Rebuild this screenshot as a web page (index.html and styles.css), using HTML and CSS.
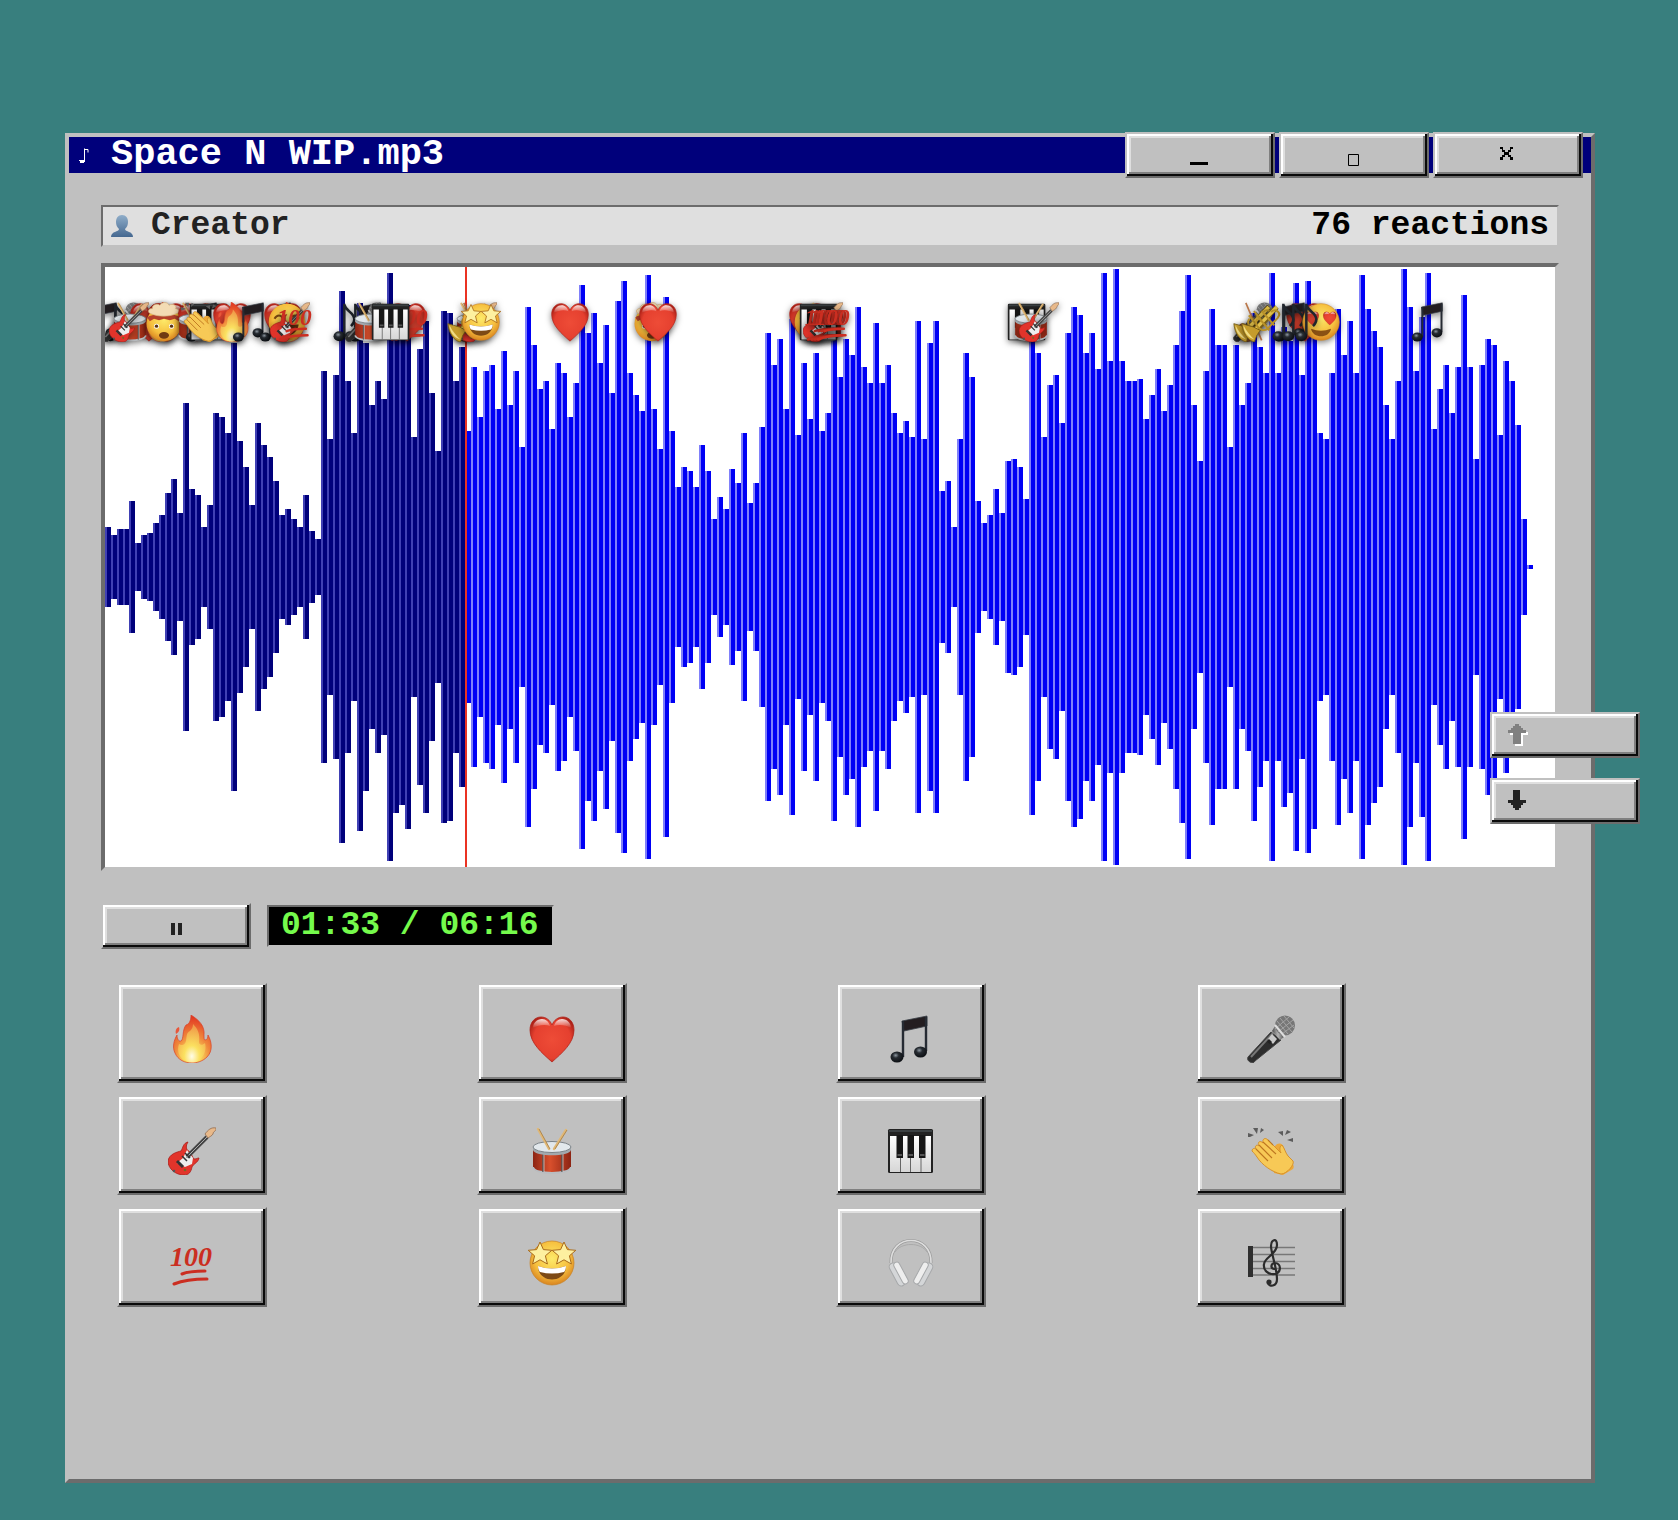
FILE: index.html
```html
<!DOCTYPE html>
<html lang="en">
<head>
<meta charset="utf-8">
<meta name="viewport" content="width=device-width, initial-scale=1">
<title>Space N WIP.mp3</title>
<link rel="stylesheet" href="styles.css">
</head>
<body>
<svg class="sprite" aria-hidden="true">
  <defs>
    <radialGradient id="g-fire" cx=".5" cy=".9" r=".85"><stop offset="0" stop-color="#fffbe0"/><stop offset=".2" stop-color="#fbe25f"/><stop offset=".55" stop-color="#f08a3c"/><stop offset="1" stop-color="#e23a22"/></radialGradient>
    <radialGradient id="g-flame" cx=".5" cy=".85" r=".8"><stop offset="0" stop-color="#fffce8"/><stop offset=".35" stop-color="#fbe160"/><stop offset="1" stop-color="#f09a48"/></radialGradient>
    <radialGradient id="g-heart" cx=".5" cy=".5" r=".6"><stop offset="0" stop-color="#ee4c37"/><stop offset=".7" stop-color="#e5402f"/><stop offset="1" stop-color="#a31d14"/></radialGradient>
    <linearGradient id="g-shine" x2="0" y2="1"><stop offset="0" stop-color="#fff" stop-opacity=".85"/><stop offset="1" stop-color="#fff" stop-opacity="0"/></linearGradient>
    <radialGradient id="g-face" cx=".5" cy=".4" r=".6"><stop offset="0" stop-color="#fdea6a"/><stop offset=".65" stop-color="#f6bf3e"/><stop offset="1" stop-color="#d98420"/></radialGradient>
    <linearGradient id="g-drum"><stop offset="0" stop-color="#8c2413"/><stop offset=".45" stop-color="#d84f2c"/><stop offset="1" stop-color="#8c2413"/></linearGradient>
    <linearGradient id="g-steel"><stop offset="0" stop-color="#4a4a4a"/><stop offset=".5" stop-color="#b4b4b4"/><stop offset="1" stop-color="#555"/></linearGradient>
    <linearGradient id="g-keys" x2="0" y2="1"><stop offset="0" stop-color="#fff"/><stop offset="1" stop-color="#d6d6d6"/></linearGradient>
    <linearGradient id="g-person" x2="0" y2="1"><stop offset="0" stop-color="#8fadc9"/><stop offset="1" stop-color="#456890"/></linearGradient>
    <radialGradient id="g-head" cx=".4" cy=".35" r=".6"><stop offset="0" stop-color="#8d97a0"/><stop offset=".4" stop-color="#262b31"/><stop offset="1" stop-color="#0f1216"/></radialGradient>
    <path id="star" d="M0-12 3.4-4.4 11.8-3.7 5.4 1.8 7.4 10 0 5.8-7.4 10-5.4 1.8-11.8-3.7-3.4-4.4Z"/>
  </defs>

  <symbol id="fire" viewBox="0 0 48 48">
    <path fill="url(#g-fire)" stroke="#d9402a" stroke-width=".7" d="M23 0C31 5 37 11 36 20c0 3 0 5 1 5 2 0 3-2 3-5 4 7 5 16-1 22-4 4-10 6-15 6-7 0-14-3-17-10-3-6-1-13 2-18 0 4 2 7 4 6 3-2 1-11 5-16 4-1 5-6 5-10Z"/>
    <path fill="url(#g-flame)" d="M25 9c5 5 7 10 6 18 0 3 3 4 6 1 2 8-2 19-13 19S8 38 11 29c3 2 6 1 7-3 1-5 0-8 4-10 2-2 3-4 3-7Z"/>
    <path fill="#e8563a" d="M11 12c1 3 0 5-3 7-1-3 0-6 3-7Z"/>
  </symbol>
  <symbol id="heart" viewBox="0 0 48 48">
    <path fill="url(#g-heart)" stroke="#b3231a" stroke-width=".8" d="M24 47C14 38 2 28 2 15 2 7 7 2 13 2c5 0 9 3 11 8 2-5 6-8 11-8 6 0 11 5 11 13 0 13-12 23-22 32Z"/>
    <path fill="url(#g-shine)" d="M5 13c0-5 4-9 9-9 4 0 7 3 8 7-5-2-12-1-17 2ZM43 13c0-5-4-9-9-9-4 0-7 3-8 7 5-2 12-1 17 2Z"/>
  </symbol>
  <symbol id="notes" viewBox="0 0 48 48">
    <path fill="#231d20" stroke="#3a4048" stroke-width=".8" d="M15 6 40 1v10L17 16Z"/>
    <path fill="none" stroke="#262b33" stroke-width="2.4" d="M16 6v36M39 2v34"/>
    <ellipse cx="10" cy="42" rx="6.5" ry="5.5" fill="url(#g-head)"/><ellipse cx="33.500" cy="37" rx="6.500" ry="5.500" fill="url(#g-head)"/>
  </symbol>
  <symbol id="note" viewBox="0 0 48 48">
    <path fill="none" stroke="#20252c" stroke-width="3" d="M22 2v38M22 3c2 9 12 9 12 18 0 4-2 6-4 8"/>
    <ellipse cx="16" cy="41" rx="7" ry="6" fill="url(#g-head)"/>
  </symbol>
  <symbol id="mic" viewBox="0 0 48 48">
    <path fill="#2d2d2d" stroke="#444" d="M24 17 1 42c-1 2 0 4 2 5s4 1 5-1l26-21Z"/>
    <path fill="none" stroke="#777" stroke-width="2" d="M26 18 4 42"/>
    <path fill="#c9c9c9" d="m25 19 5 5-4 5-5-5Z"/><path fill="#222" d="m22 24 3 3-2 2-3-2Z"/>
    <path fill="url(#g-steel)" d="m28 11 9 11-4 3-8-9Z"/>
    <circle cx="38" cy="10.500" r="10" fill="#777"/>
    <path fill="none" stroke="#a4a4a4" stroke-width="1" d="m30 6 11 13M33 3l12 14M37 1l10 12M29 11l7 8M28 14 42 2M31 17 46 5M35 19l12-9"/>
    <path fill="none" stroke="#ddd" stroke-width="2" d="m28 10 10 12"/>
  </symbol>
  <symbol id="guitar" viewBox="0 0 48 48">
    <path fill="#e2342b" stroke="#a81d19" stroke-width=".8" d="M20 15c-5 1-5 6-7 9C9 25 1 27 0 34c0 8 8 14 16 14 5 0 7-3 8-8 1-3 6-4 7-9-2 0-4 2-6 0-1-3-4-8-6-8-1-3-1-5 1-8Z"/>
    <path fill="#eee" d="m19 23 6 8-1 6-7 3-8-4 6-5Z"/>
    <path stroke="#444" stroke-width="4" d="M19 30 39 10"/><path stroke="#aaa" stroke-width="1" d="M18 31 40 9"/>
    <path stroke="#333" stroke-width="3" d="m9 34 6 6"/><path stroke="#333" stroke-width="1.500" d="m14 29 5 5M17 26l5 5"/>
    <path fill="#e8b98a" stroke="#8e6b50" stroke-width=".8" d="M37 7c3-4 6-7 11-6 1 3-3 3-3 6-1 2-4 3-5 4Z"/>
    <circle cx="17" cy="43" r="1.300" fill="#762"/><circle cx="6" cy="44" r="1.300" fill="#555"/>
  </symbol>
  <symbol id="drum" viewBox="0 0 48 48">
    <path fill="url(#g-drum)" d="M5 21v19c0 8 38 8 38 0V21Z"/>
    <path fill="none" stroke="#b9bdc1" stroke-width="2" d="M5 40c1 8 37 8 38 0"/>
    <path stroke="#555" stroke-width="1.500" d="M15 26v19M34 26v19"/><path stroke="#ccc" stroke-width=".8" d="M16 26v19M35 26v19"/>
    <path fill="#a2a9ae" d="M5 19v4c1 7 37 7 38 0v-4Z"/>
    <ellipse cx="24" cy="20" rx="19" ry="5.500" fill="#e2e8ec" stroke="#7b8287"/>
    <path stroke="#e0b876" stroke-width="2.400" stroke-linecap="round" d="m10 2 11 20M38 3 26 22"/>
    <path stroke="#99713d" stroke-width=".7" d="m11 2 11 20M39 3 27 22"/>
  </symbol>
  <symbol id="piano" viewBox="0 0 48 48">
    <rect x="1" y="2" width="45" height="44" rx="1.500" fill="#222"/><rect x="3" y="9" width="41" height="36" fill="url(#g-keys)"/>
    <path fill="#3b4042" d="M2 3h43v2H2z"/><path stroke="#666" d="M13.500 9v36M23.500 9v36M34 9v36"/>
    <path fill="#161616" d="M9.500 8H16v23H9.500zM20.500 8H27v23h-6.500zM32 8h6.500v23H32z"/>
    <path fill="#555" d="M10.500 27H15v2h-4.500zM21.500 27H26v2h-4.500zM33 27h4.500v2H33z"/>
  </symbol>
  <symbol id="clap" viewBox="0 0 48 48">
    <path fill="#eda93a" d="M28 19c3-4 8-3 9 2l4 13c5 2 7 5 5 8L36 48l-9-2Z"/>
    <path fill="#f7c956" stroke="#d28b26" stroke-width=".9" d="M5 24c0-3 3-3 4-2-2-3 1-5 3-3-2-4 1-6 4-3-1-4 2-6 5-3l13 13c-2-4-1-7 1-8 3 4 3 7 6 11l5 5c2 3-6 13-12 13-9-2-19-9-24-17-2-3-3-4-5-6Z"/>
    <path fill="none" stroke="#bd7520" stroke-width="1.100" d="m9 22 12 12M12 18l13 13M16 15l13 12M21 13l5 5"/>
    <path fill="#5c5c5c" d="m1 6 6 2-4 2H1ZM6 1l4 6 1-6ZM13 6l1-5 3 2ZM31 5l5 4 0-5ZM38 8l2-5 4 2ZM40 13l6-2v4Z"/>
  </symbol>
  <symbol id="starry" viewBox="0 0 48 48">
    <circle cx="24" cy="24" r="22" fill="url(#g-face)" stroke="#c98222" stroke-width=".7"/>
    <path fill="#7d4a15" d="M10 27q14 5 28 0c0 18-28 18-28 0Z"/><path fill="#fff" d="M10 27q14 5 28 0c0 3-1 5-2 6q-12 3-24 0c-1-1-2-3-2-6Z"/>
    <g fill="#fdf0a0" stroke="#a96a1b" stroke-width="1"><use href="#star" x="12" y="15"/><use href="#star" x="36" y="15"/></g>
  </symbol>
  <symbol id="headphones" viewBox="0 0 48 48">
    <path fill="none" stroke="#9b9b9b" stroke-width="3" d="M4 24C3-6 45-6 44 24"/><path fill="none" stroke="#dedede" stroke-width="1.600" d="M4 24C3-6 45-6 44 24"/>
    <path fill="none" stroke="#aaa" stroke-width="1" d="M8 13C14 3 34 3 40 13"/>
    <g stroke="#a6a8aa" stroke-width="1" fill="#d4d6d8"><rect x="6" y="23" width="8" height="25" rx="4" transform="rotate(-28 10 35)"/><rect x="34" y="23" width="8" height="25" rx="4" transform="rotate(28 38 35)"/><rect x="11" y="22" width="6" height="24" rx="3" transform="rotate(-28 14 34)" fill="#eee"/><rect x="31" y="22" width="6" height="24" rx="3" transform="rotate(28 34 34)" fill="#eee"/></g>
  </symbol>
  <symbol id="score" viewBox="0 0 48 48">
    <path stroke="#777" stroke-width="1.400" d="M1 8.500h47M1 15.500h47M1 22.500h47M1 29.500h47M1 36h47"/><path fill="#2f2f2f" d="M1 7h5v31H1z"/>
    <path fill="none" stroke="#2b2b2b" stroke-width="2.200" stroke-linecap="round" d="M27 30c-4-1-3-6 1-6 6 0 7 9 0 11-7 1-12-4-11-10 1-7 13-10 13-19 0-8-6-5-6 1 0 7 6 22 6 33 0 8-8 8-9 4"/>
    <circle cx="22" cy="43" r="2.600" fill="#2b2b2b"/>
  </symbol>
  <symbol id="blown" viewBox="0 0 48 48">
    <circle cx="24" cy="26" r="21" fill="url(#g-face)"/>
    <path fill="#b5412b" d="M4 19c4-6 36-6 40 0l-2 4-5-3-6 2-7-2-6 2-6-2-5 3Z"/>
    <path fill="#f3dcb4" stroke="#cfaa78" stroke-width=".8" d="M8 14c-5-2-2-7 2-6-1-5 7-7 9-4 3-5 10-4 11 0 4-3 10 0 8 4 5 0 5 5 1 6-9 4-22 4-31 0Z"/>
    <circle cx="15" cy="29" r="3" fill="#fff"/><circle cx="33" cy="29" r="3" fill="#fff"/><circle cx="15" cy="29" r="2" fill="#5a3212"/><circle cx="33" cy="29" r="2" fill="#5a3212"/>
    <ellipse cx="24" cy="40" rx="6" ry="4" fill="#713a12"/>
  </symbol>
  <symbol id="smitten" viewBox="0 0 48 48">
    <circle cx="24" cy="24" r="22" fill="url(#g-face)" stroke="#d18a22" stroke-width=".7"/><use href="#heart" x="5" y="11" width="17" height="17"/><use href="#heart" x="26" y="11" width="17" height="17"/>
    <path fill="#8a5114" d="M12 32q12 5 24 0c-2 12-22 12-24 0Z"/>
  </symbol>
  <symbol id="laugh" viewBox="0 0 48 48">
    <circle cx="24" cy="24" r="22" fill="url(#g-face)"/><path fill="none" stroke="#7b4a12" stroke-width="2.500" d="M9 20c3-5 8-5 10 0M28 20c3-5 8-5 10 0"/><path fill="#6c3310" d="M11 27h27c-2 17-25 17-27 0Z"/>
  </symbol>
  <symbol id="trumpet" viewBox="0 0 48 48">
    <path fill="none" stroke="#705a17" stroke-width="6" d="M43 6 12 38"/><path fill="none" stroke="#e1c04b" stroke-width="4" d="M43 6 12 38"/>
    <path fill="#c59c2c" stroke="#705a17" d="M1 26c5 1 9 3 14 4l8 4-4 6-3 8C8 46 2 37 1 26Z"/><path fill="#f0dc82" d="M3 28c4 8 8 12 13 17-8-2-13-9-13-17Z"/>
    <path fill="none" stroke="#b89129" stroke-width="2.500" d="m19 16 15 18M25 11l15 17M20 20c-6 6 4 18 12 12l12-13c5-6-2-12-8-7"/>
  </symbol>
  <symbol id="violin" viewBox="0 0 48 48">
    <path stroke="#b9774a" stroke-width="2" d="m13 1 19 45"/><path fill="#a85a2b" stroke="#5f2f14" d="M6 27c6-3 8 3 13 1 6-1 11 3 9 8-2 3-5 3-6 7-2 7-15 5-18-3-2-5 0-10 2-13Z"/><path stroke="#3b2114" stroke-width="4" d="M17 33 40 5"/>
  </symbol>
</svg>

<main class="window">
  <header class="title-bar">
    <svg class="title-icon" viewBox="0 0 10 16" aria-hidden="true"><path fill="none" stroke="#fff" d="M5.500 15V1.500M6 2.500h3v3"/><path fill="#fff" d="M0 13h5v3H1v-2H0z"/></svg>
    <h1 class="title">Space N WIP.mp3</h1>
    <div class="window-buttons">
      <button class="btn" type="button" aria-label="Minimize"><svg width="20" height="20" viewBox="0 0 20 20"><path d="M0 17h18v3H0z"/></svg></button>
      <button class="btn" type="button" aria-label="Maximize"><svg width="20" height="20" viewBox="0 0 20 20"><path fill="none" stroke="#000" d="M4.500 9.500h10v11h-10z"/></svg></button>
      <button class="btn" type="button" aria-label="Close"><svg width="20" height="20" viewBox="0 0 20 20"><path d="M2 2h3v3h2v2h3V5h2V2h3v2h-2v3h-2v3h2v2h2v3h-3v-3h-2v-2H7v2H5v3H2v-3h2v-2h2V7H4V4H2z"/></svg></button>
    </div>
  </header>

  <div class="window-body">
    <section class="info" aria-label="Track">
      <span class="creator"><svg class="person" viewBox="0 0 22 22" aria-hidden="true"><path fill="url(#g-person)" d="M11 0c4 0 6 3 6 7 0 3-1 5-3 7 0 3 8 2 8 8H0c0-6 8-5 8-8-2-2-3-4-3-7 0-4 2-7 6-7Z"/></svg>Creator</span>
      <span class="count">76 reactions</span>
    </section>

    <section class="wave" aria-label="Waveform">
      <svg class="bars" viewBox="0 0 1450 600" preserveAspectRatio="none" aria-hidden="true"></svg>
      <div class="playhead"></div>
      <div class="pins"></div>
    </section>

    <section class="controls">
      <button class="btn" type="button" aria-label="Pause"><svg class="pause" width="11" height="12" viewBox="0 0 11 12"><path d="M0 0h4v12H0zM7 0h4v12H7z"/></svg></button>
      <output class="time">01:33 / 06:16</output>
    </section>

    <section class="reactions" aria-label="React">
      <button class="btn react" type="button" aria-label="Fire"><svg><use href="#fire"/></svg></button>
      <button class="btn react" type="button" aria-label="Heart"><svg><use href="#heart"/></svg></button>
      <button class="btn react" type="button" aria-label="Notes"><svg><use href="#notes"/></svg></button>
      <button class="btn react" type="button" aria-label="Microphone"><svg><use href="#mic"/></svg></button>
      <button class="btn react" type="button" aria-label="Guitar"><svg><use href="#guitar"/></svg></button>
      <button class="btn react" type="button" aria-label="Drum"><svg><use href="#drum"/></svg></button>
      <button class="btn react" type="button" aria-label="Keyboard"><svg><use href="#piano"/></svg></button>
      <button class="btn react" type="button" aria-label="Clap"><svg><use href="#clap"/></svg></button>
      <button class="btn react" type="button" aria-label="Hundred"><svg class="hundred" viewBox="0 0 48 48"><text class="hundred-digits" x="2" y="27">100</text><path fill="none" stroke="#cb2e21" stroke-width="3" stroke-linecap="round" d="M14 35c7-3 14-3 23-3M6 45c10-4 21-5 33-5"/></svg></button>
      <button class="btn react" type="button" aria-label="Star-struck"><svg><use href="#starry"/></svg></button>
      <button class="btn react" type="button" aria-label="Headphones"><svg><use href="#headphones"/></svg></button>
      <button class="btn react" type="button" aria-label="Score"><svg><use href="#score"/></svg></button>
    </section>
  </div>
</main>

<nav class="pager" aria-label="Tracks">
  <button class="btn" type="button" aria-label="Previous track" disabled><svg width="20" height="22" viewBox="0 0 20 22"><path fill="#fff" d="M9 2h4v2h2v2h2v2h3v3h-5v11H7V11H2V8h3V6h2V4h2z"/><path fill="#808080" d="M7 0h4v2h2v2h2v2h3v3h-5v11H5V9H0V6h3V4h2V2h2z"/></svg></button>
  <button class="btn" type="button" aria-label="Next track"><svg width="20" height="22" viewBox="0 0 20 22"><path fill="#222" d="M5 0h7v10h6v3h-3v2h-2v3h-2v2H7v-2H5v-3H3v-2H0v-3h5z"/></svg></button>
</nav>
<script src="script.js"></script>
</body>
</html>
```
FILE: styles.css
```css
* {
  box-sizing: border-box;
}

body {
  margin: 0;
  min-height: 100vh;
  padding: 133px 83px 37px 65px;
  display: flex;
  background: #387f7e;
  color: #000;
  font-family: "Liberation Mono", "Courier New", monospace;
  font-size: 33px;
  line-height: 38px;
  font-weight: 700;
}

.sprite {
  position: absolute;
  width: 0;
  height: 0;
}

.hundred-digits {
  font: italic 700 28px "Liberation Serif", "Times New Roman", serif;
  fill: #cb2e21;
}

.window {
  flex: 1;
  min-width: 0;
  background: #c0c0c0;
  border: 4px solid;
  border-color: #c0c0c0 #6c6c6c #6c6c6c #c0c0c0;
}

.title-bar {
  height: 36px;
  padding: 0 8px 0 10px;
  display: flex;
  align-items: center;
  background: #00007b;
  color: #fff;
}

.title-icon {
  width: 10px;
  height: 16px;
}

.title {
  margin: 0 auto 0 22px;
  padding-bottom: 2px;
  font-size: 37px;
  line-height: 36px;
}

.window-buttons {
  display: flex;
  gap: 4px;
}

.btn {
  width: 150px;
  height: 46px;
  padding: 0;
  display: flex;
  align-items: center;
  justify-content: center;
  background: #c0c0c0;
  border: 2px solid;
  border-color: #c0c0c0 #6c6c6c #6c6c6c #c0c0c0;
  border-radius: 0;
  box-shadow: inset -2px -2px #0a0a0a, inset 2px 2px #fff, inset -4px -4px #808080, inset 4px 4px #dfdfdf;
}

.btn svg {
  overflow: visible;
}

.window-body {
  padding: 32px;
}

.info,
.time {
  border: 2px solid;
  border-color: #6c6c6c #c0c0c0 #c0c0c0 #6c6c6c;
}

.info {
  display: flex;
  justify-content: space-between;
  padding: 0 8px;
  background: #dfdfdf;
}

.creator {
  display: flex;
  align-items: center;
  gap: 18px;
  color: #222;
}

.person {
  width: 22px;
  height: 22px;
}

.wave {
  position: relative;
  margin-top: 16px;
  height: 608px;
  overflow: hidden;
  background: #fff;
  border: 4px solid;
  border-color: #6c6c6c #c0c0c0 #c0c0c0 #6c6c6c;
}

.bars {
  display: block;
  width: 100%;
  height: 100%;
}

.played {
  fill: #00007b;
}

.played-edge {
  fill: #4040b4;
}

.ahead {
  fill: #0000f5;
}

.ahead-edge {
  fill: #8080fa;
}

.playhead {
  position: absolute;
  top: 0;
  bottom: 0;
  left: 24.83%;
  width: 2px;
  background: #ea3323;
}

.pin {
  position: absolute;
  top: 35px;
  width: 40px;
  height: 40px;
  margin-left: -20px;
  overflow: visible;
  filter: drop-shadow(0 2px 3px rgba(0, 0, 0, .5));
}

.controls {
  margin-top: 32px;
  display: flex;
  align-items: center;
  gap: 16px;
}

.pause {
  fill: #222;
  margin-top: 6px;
}

.time {
  padding: 0 14px 0 12px;
  background: #000;
  color: #75fb4c;
}

.reactions {
  margin-top: 34px;
  padding: 0 16px;
  display: grid;
  grid-template-columns: repeat(4, 1fr);
  gap: 12px;
}

.react {
  height: 100px;
  padding-top: 12px;
}

.react svg {
  width: 48px;
  height: 48px;
}

.pager {
  position: fixed;
  right: 38px;
  top: 8px;
  height: 100vh;
  display: flex;
  flex-direction: column;
  justify-content: center;
  gap: 20px;
  pointer-events: none;
}

.pager .btn {
  justify-content: flex-start;
  padding-left: 16px;
  pointer-events: auto;
}
```
FILE: script.js
```js
// Peak level of each bar, 150 = full scale.
const peaks = [
  20,16,19,19,33,12,16,17,22,26,37,44,27,82,39,36,20,31,77,75,
  67,112,63,50,31,72,61,55,43,26,29,24,20,36,18,14,98,64,96,138,
  93,67,132,112,81,93,84,147,123,119,131,65,109,123,87,58,128,127,93,110,
  68,100,75,98,101,79,108,81,98,60,130,111,89,93,69,102,97,75,92,141,
  117,127,102,121,87,133,143,97,86,78,146,79,59,135,68,40,50,48,40,61,
  48,24,35,29,49,42,67,32,42,70,117,101,114,79,124,66,102,74,107,68,
  77,127,95,114,106,130,100,92,122,92,101,77,67,73,65,123,64,112,123,38,
  43,20,64,107,95,33,22,26,39,27,53,54,50,34,124,107,65,91,96,72,
  117,130,126,107,117,99,147,103,149,103,93,93,94,74,86,99,78,91,111,128,
  146,81,53,98,129,111,111,60,111,81,92,127,110,97,147,97,120,113,142,96,
  143,131,67,64,97,129,106,123,97,146,129,118,110,81,64,93,149,130,98,125,
  147,69,89,101,77,100,136,100,54,101,114,111,66,103,93,71,24,1
];
const playedBars = 60;
const NS = 'http://www.w3.org/2000/svg';
const bars = document.querySelector('.bars');

function addPath(from, to, dx, width, className) {
  let d = '';
  for (let i = from; i < to; i++) {
    const half = peaks[i] * 2;
    d += `M${i * 6 + dx} ${300 - half}h${width}v${half * 2}h-${width}z`;
  }
  const path = document.createElementNS(NS, 'path');
  path.setAttribute('d', d);
  path.setAttribute('class', className);
  bars.appendChild(path);
}

addPath(0, playedBars, 0, 2, 'played-edge');
addPath(0, playedBars, 2, 4, 'played');
addPath(playedBars, peaks.length, 0, 2, 'ahead-edge');
addPath(playedBars, peaks.length, 2, 4, 'ahead');

// Reactions left on the track: [icon, position along the 1450-unit timeline].
const pins = [
  ['notes', -2], ['note', 12], ['mic', 17], ['heart', 44], ['drum', 25], ['guitar', 24],
  ['fire', 58], ['heart', 62], ['blown', 59], ['heart', 92], ['drum', 90], ['notes', 98],
  ['piano', 104], ['clap', 95], ['heart', 127], ['fire', 127], ['notes', 145],
  ['notes', 172], ['heart', 178], ['fire', 182], ['laugh', 182], ['guitar', 185], ['hundred', 190],
  ['note', 241], ['note', 252], ['notes', 262], ['mic', 260], ['drum', 266],
  ['hundred', 302], ['heart', 302], ['hundred', 306], ['piano', 286],
  ['violin', 368], ['drum', 368], ['guitar', 372], ['trumpet', 362], ['starry', 376],
  ['heart', 465], ['blown', 547], ['heart', 553],
  ['heart', 703], ['laugh', 708], ['drum', 720], ['piano', 714], ['guitar', 718],
  ['hundred', 718], ['hundred', 722], ['hundred', 725], ['hundred', 728],
  ['piano', 922], ['drum', 926], ['guitar', 934],
  ['mic', 1148], ['violin', 1150], ['trumpet', 1148], ['trumpet', 1156],
  ['heart', 1200], ['notes', 1186], ['note', 1180], ['note', 1190], ['smitten', 1216], ['note', 1203],
  ['notes', 1324]
];
const layer = document.querySelector('.pins');
const hundred = document.querySelector('.hundred');
for (const [icon, at] of pins) {
  let svg;
  if (icon === 'hundred') {
    svg = hundred.cloneNode(true);
  } else {
    svg = document.createElementNS(NS, 'svg');
    const use = document.createElementNS(NS, 'use');
    use.setAttribute('href', `#${icon}`);
    svg.appendChild(use);
  }
  svg.setAttribute('class', 'pin');
  svg.setAttribute('aria-hidden', 'true');
  svg.style.left = `${at / 14.5}%`;
  layer.appendChild(svg);
}
```
